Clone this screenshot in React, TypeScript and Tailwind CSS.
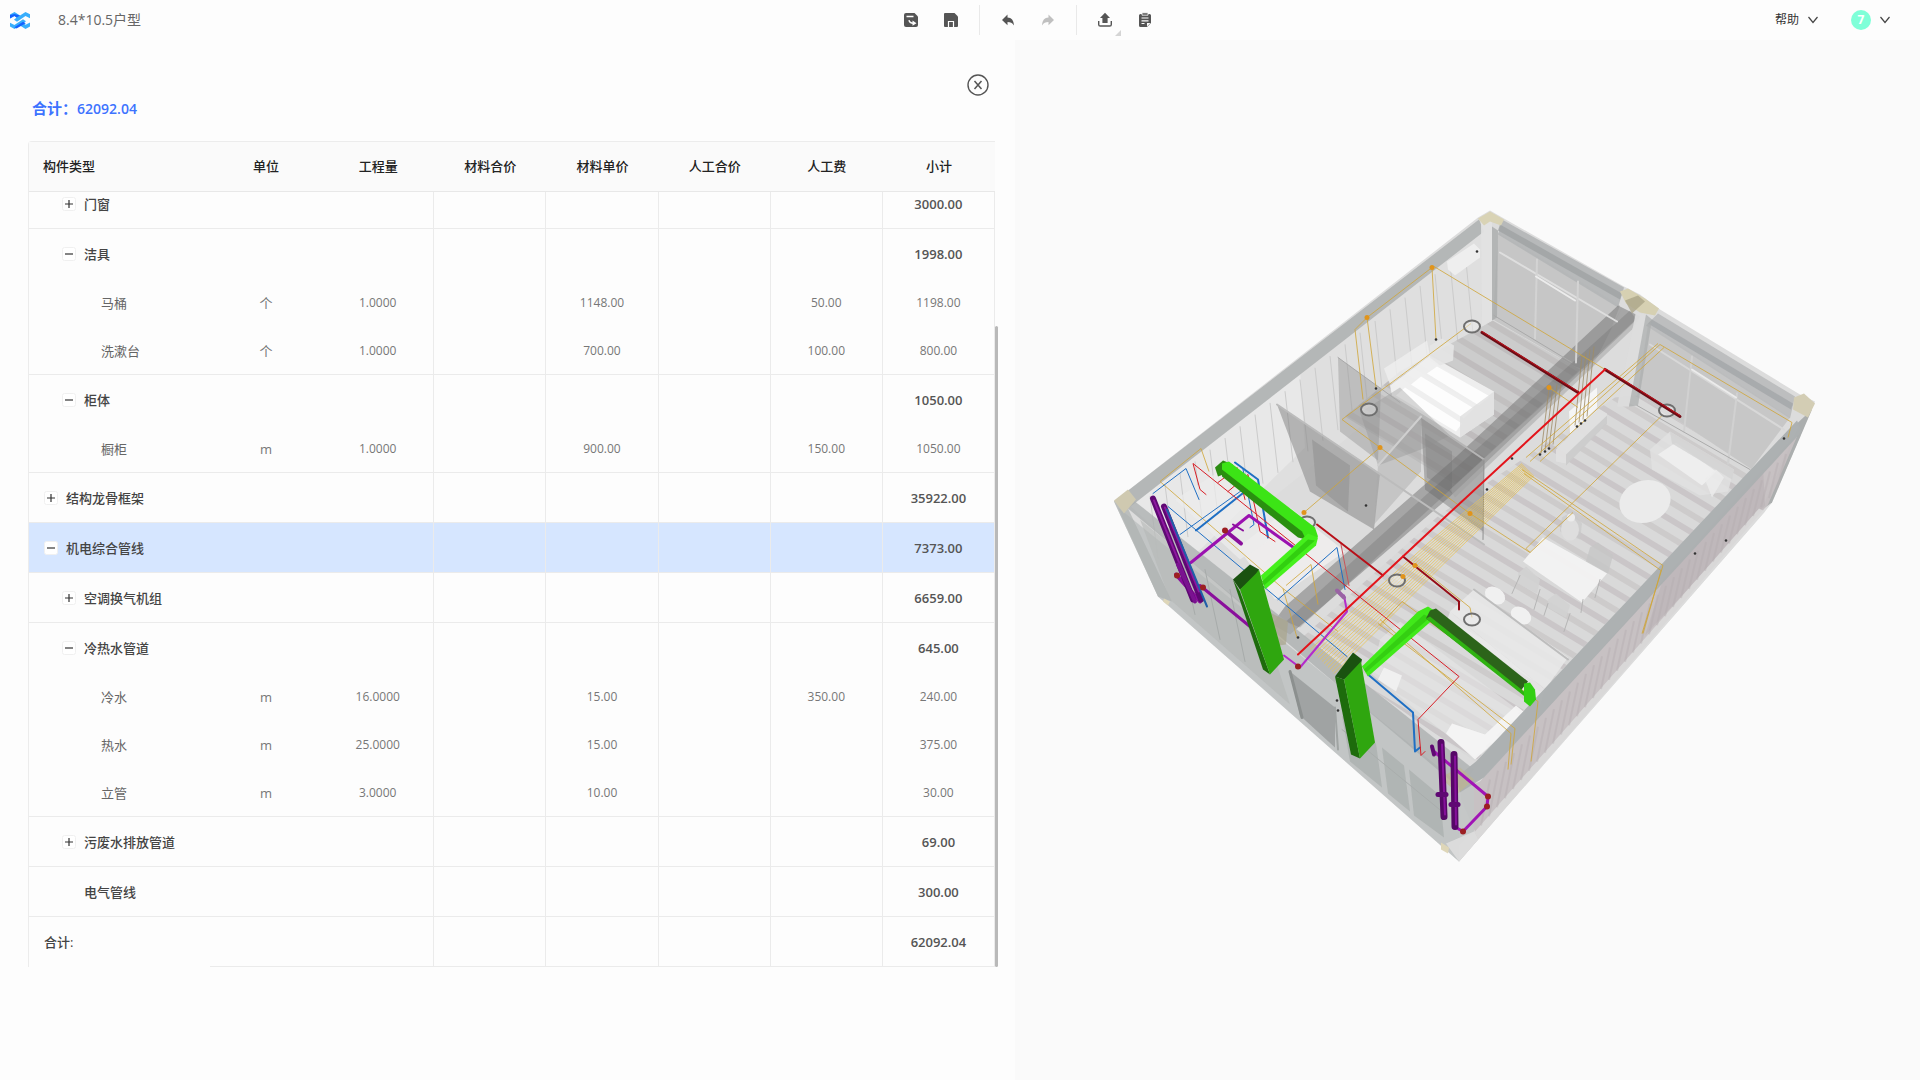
import { useState } from 'react';

type Row = {
  name: string;
  level: number;
  icon?: 'plus' | 'minus';
  leaf?: boolean;
  groupEnd?: boolean;
  unit?: string;
  amount?: string;
  materialPrice?: string;
  labor?: string;
  subtotal: string;
};

const columns = ['构件类型', '单位', '工程量', '材料合价', '材料单价', '人工合价', '人工费', '小计'];

const rows: Row[] = [
  { name: '门窗', level: 1, icon: 'plus', subtotal: '3000.00' },
  { name: '洁具', level: 1, icon: 'minus', subtotal: '1998.00' },
  { name: '马桶', level: 2, leaf: true, unit: '个', amount: '1.0000', materialPrice: '1148.00', labor: '50.00', subtotal: '1198.00' },
  { name: '洗漱台', level: 2, leaf: true, groupEnd: true, unit: '个', amount: '1.0000', materialPrice: '700.00', labor: '100.00', subtotal: '800.00' },
  { name: '柜体', level: 1, icon: 'minus', subtotal: '1050.00' },
  { name: '橱柜', level: 2, leaf: true, groupEnd: true, unit: 'm', amount: '1.0000', materialPrice: '900.00', labor: '150.00', subtotal: '1050.00' },
  { name: '结构龙骨框架', level: 0, icon: 'plus', subtotal: '35922.00' },
  { name: '机电综合管线', level: 0, icon: 'minus', subtotal: '7373.00' },
  { name: '空调换气机组', level: 1, icon: 'plus', subtotal: '6659.00' },
  { name: '冷热水管道', level: 1, icon: 'minus', subtotal: '645.00' },
  { name: '冷水', level: 2, leaf: true, unit: 'm', amount: '16.0000', materialPrice: '15.00', labor: '350.00', subtotal: '240.00' },
  { name: '热水', level: 2, leaf: true, unit: 'm', amount: '25.0000', materialPrice: '15.00', subtotal: '375.00' },
  { name: '立管', level: 2, leaf: true, groupEnd: true, unit: 'm', amount: '3.0000', materialPrice: '10.00', subtotal: '30.00' },
  { name: '污废水排放管道', level: 1, icon: 'plus', subtotal: '69.00' },
  { name: '电气管线', level: 1, subtotal: '300.00' },
];

// ---- Icons ----

function Logo() {
  return (
    <svg viewBox="0 0 20 17" className="h-[17px] w-5">
      <path d="M0 2.5 4.500 0 10 3.4 15.500 0 20 2.300v4L15.500 4 7 9.800 4 7.800 6.600 5.600 4.400 4 0 6.600z" fill="#38aefc" />
      <path d="M0 10.800 4.400 13 13 7.200 16 9.200 13.400 11.200l2.200 1.600L20 10.400v4L15.500 17 10 13.600 4.500 17 0 14.400z" fill="#38aefc" />
      <path d="M0 3v3.600L4.400 4l2.200 1.600L10 3.400 4.500 2z" fill="#1463ff" />
      <path d="M4.400 15.200 13 9.800l2.800 1.400L10 14.600 6.500 16.500z" fill="#1463ff" />
    </svg>
  );
}

function SaveAsIcon() {
  return (
    <svg viewBox="0 0 16 16" className="size-4" fill="#555">
      <path d="M3 1h8.500L15 4.500V13a2 2 0 0 1-2 2H3a2 2 0 0 1-2-2V3a2 2 0 0 1 2-2z" />
      <path d="M3.500 4.500h7" stroke="#fff" strokeWidth="1.500" />
      <path d="M6 8.200c.3 2.400 2.200 3 4.500 3" stroke="#fff" strokeWidth="1.400" fill="none" />
      <path d="m9.500 8.500 4 2.700-4 2.600z" fill="#fff" />
    </svg>
  );
}

function SaveIcon() {
  return (
    <svg viewBox="0 0 16 16" className="size-4">
      <path d="M2 1h9.500L15 4.500V14a1 1 0 0 1-1 1H2a1 1 0 0 1-1-1V2a1 1 0 0 1 1-1z" fill="#555" />
      <path d="M5.500 15V9.500h5V15" stroke="#fff" strokeWidth="1.200" fill="none" />
    </svg>
  );
}

function ArrowIcon({ redo = false }: { redo?: boolean }) {
  return (
    <svg viewBox="0 0 16 16" className={redo ? 'size-4 -scale-x-100' : 'size-4'}>
      <path d="M7.500 2.500v3c4 .2 6.200 2.800 6.500 8-1.800-2.600-3.400-3.400-6.500-3.400v3.200L2 7.900z" fill={redo ? '#c0c0c0' : '#555'} />
    </svg>
  );
}

function ExportIcon() {
  return (
    <svg viewBox="0 0 16 16" className="size-4">
      <path d="M8 .8 13 6h-2.400v5H5.400V6H3z" fill="#555" />
      <path d="M1.700 9v3.400a1.600 1.600 0 0 0 1.600 1.600h9.400a1.600 1.600 0 0 0 1.600-1.600V9" stroke="#555" strokeWidth="1.400" fill="none" />
    </svg>
  );
}

function ListIcon() {
  return (
    <svg viewBox="0 0 16 16" className="size-4">
      <path d="M3.500 2h9A1.500 1.500 0 0 1 14 3.500V11l-4 4H3.500A1.500 1.500 0 0 1 2 13.500v-10A1.500 1.500 0 0 1 3.500 2z" fill="#555" />
      <path d="M5 .8h6v2.400H5z" fill="#555" stroke="#fff" strokeWidth=".8" />
      <path d="M4.500 6h7M4.500 8.800h7M4.500 11.500h3" stroke="#fff" strokeWidth="1.200" />
      <path d="M10 11h3.500L10 14.600z" fill="#fff" />
    </svg>
  );
}

function Chevron() {
  return (
    <svg viewBox="0 0 12 8" className="h-2 w-3">
      <path d="m1.500 1 4.500 5.500L10.500 1" stroke="#444" strokeWidth="1.200" fill="none" />
    </svg>
  );
}

function ExpandIcon({ type }: { type: 'plus' | 'minus' }) {
  return (
    <svg viewBox="0 0 14 14" className="size-[14px]">
      <rect x=".5" y=".5" width="13" height="13" rx="2" fill="#fff" stroke="#f0f0f0" />
      <path d={type === 'plus' ? 'M3 7h8M7 3v8' : 'M3 7h8'} stroke="#333" strokeWidth="1.200" />
    </svg>
  );
}

// ---- Top bar ----

function TopBar() {
  return (
    <header className="flex h-10 items-center bg-[#fdfdfd]">
      <div className="flex w-[47%] items-center gap-7 pl-[10px]">
        <Logo />
        <h1 className="text-sm text-[#666]">8.4*10.5户型</h1>
      </div>
      <div className="flex flex-1 items-center pl-px">
        <div className="flex items-center gap-6">
          <button aria-label="另存为"><SaveAsIcon /></button>
          <button aria-label="保存"><SaveIcon /></button>
        </div>
        <div className="mx-5 h-[30px] w-px bg-[#e9e9e9]" />
        <div className="flex items-center gap-6">
          <button aria-label="撤销"><ArrowIcon /></button>
          <button aria-label="重做"><ArrowIcon redo /></button>
        </div>
        <div className="mx-5 h-[30px] w-px bg-[#e9e9e9]" />
        <div className="flex items-center gap-6">
          <button aria-label="导出" className="relative">
            <ExportIcon />
            <svg viewBox="0 0 6 6" className="absolute -right-2 -bottom-2 size-[6px]">
              <path d="M6 0v6H0z" fill="#d5d5d5" />
            </svg>
          </button>
          <button aria-label="清单"><ListIcon /></button>
        </div>
      </div>
      <div className="flex items-center gap-8 pr-[29px]">
        <button className="flex items-center gap-2 text-xs text-[#333]">
          帮助
          <Chevron />
        </button>
        <button className="flex items-center gap-2" aria-label="账户">
          <span className="flex size-5 items-center justify-center rounded-full bg-[#7fffd8] text-xs font-bold text-white">7</span>
          <Chevron />
        </button>
      </div>
    </header>
  );
}

// ---- Cost table ----

const indent = ['pl-[15px]', 'pl-[33px]', 'pl-[72px]'];

function CostTable({ selected, onSelect }: { selected: string; onSelect: (name: string) => void }) {
  return (
    <div className="relative mr-[17px] ml-7 pr-[3px]">
      <table className="w-full table-fixed border-separate border-spacing-0 rounded-tl border-t border-l border-[#ececec] text-[13px] leading-5">
        <thead>
          <tr className="h-[50px] bg-[#fafafa] text-[#222]">
            {columns.map((c, i) => (
              <th
                key={c}
                className={`border-b border-[#e8e8e8] p-0 pb-0.5 font-medium ${i === 0 ? 'w-[181px] pl-[14px] text-left' : 'text-center'}`}
              >
                {c}
              </th>
            ))}
          </tr>
        </thead>
        <tbody>
          {rows.map((row, index) => {
            const line = row.leaf ? row.groupEnd : row.icon !== 'minus' || row.level === 0;
            const border = line ? 'border-b' : '';
            const bold = row.leaf ? 'text-[#666]' : 'font-medium text-[#444]';
            const pad = index === 0 ? 'pb-3' : 'pb-0';
            const cell = `border-[#ebebeb] pt-0 px-0 text-center ${border} ${pad}`;
            return (
              <tr
                key={row.name}
                onClick={() => onSelect(row.name)}
                className={`${index === 0 ? 'h-[37px]' : row.leaf ? 'h-12' : 'h-[50px]'} ${
                  selected === row.name ? 'bg-[#d6e6ff]' : ''
                }`}
              >
                <td className={`border-[#ebebeb] py-0 pr-0 text-left ${border} ${pad} ${indent[row.level]}`}>
                  <div className={`flex items-center gap-2 ${bold}`}>
                    {row.icon && (
                      <button aria-label={row.icon === 'plus' ? '展开' : '收起'}>
                        <ExpandIcon type={row.icon} />
                      </button>
                    )}
                    {!row.icon && !row.leaf && <span className="w-[14px]" />}
                    {row.name}
                  </div>
                </td>
                <td className={`${cell} text-[#777]`}>{row.unit}</td>
                <td className={`${cell} border-r text-xs text-[#777]`}>{row.amount}</td>
                <td className={`${cell} border-r`} />
                <td className={`${cell} border-r text-xs text-[#777]`}>{row.materialPrice}</td>
                <td className={`${cell} border-r`} />
                <td className={`${cell} border-r text-xs text-[#777]`}>{row.labor}</td>
                <td className={`${cell} border-r ${row.leaf ? 'text-xs text-[#777]' : 'font-semibold text-[#555]'}`}>
                  {row.subtotal}
                </td>
              </tr>
            );
          })}
        </tbody>
        <tfoot>
          <tr className="h-[50px] font-medium text-[#444]">
            <td className="p-0 pl-[15px]">合计:</td>
            <td className="border-b border-[#ebebeb]" />
            <td className="border-r border-b border-[#ebebeb]" />
            <td className="border-r border-b border-[#ebebeb]" />
            <td className="border-r border-b border-[#ebebeb]" />
            <td className="border-r border-b border-[#ebebeb]" />
            <td className="border-r border-b border-[#ebebeb]" />
            <td className="border-r border-b border-[#ebebeb] p-0 text-center font-semibold text-[#555]">62092.04</td>
          </tr>
        </tfoot>
      </table>
      {/* Scrollbar thumb */}
      <div className="absolute right-0 bottom-0 h-[641px] w-[3px] rounded-sm bg-[#b9b9b9]" />
    </div>
  );
}

// ---- House model ----

type Shape = [points: string, fill: string, opacity?: number];
type Pipe = [points: string, color: string, width: number];

const shell: Shape[] = [
  ['1114,502 1478,218 1490,211 1504,219 1624,287 1640,295 1660,310 1800,395 1815,402 1772,503 1765,512 1459,862 1158,597', '#dcdcdc'],
  // long wall, seen from inside
  ['1130,506 1482,233 1493,321 1190,565', '#dfdfdf'],
  ['1130,506 1300,370 1305,448 1190,560', '#e8e8e8'],
  // far end walls
  ['1498,233 1620,306 1612,327 1575,367 1493,320', '#c6c6c6'],
  ['1648,325 1790,418 1751,470 1732,474 1636,404', '#c7c7c7'],
  ['1575,367 1612,327 1622,308 1590,372', '#b9b9b9', 0.6],
];

const floors: string[] = [
  '1493,321 1580,370 1455,485 1345,417 1400,372',
  '1615,398 1640,396 1752,470 1475,762 1372,690 1300,640 1440,515',
];

const interior: Shape[] = [
  // shade of the first room
  ['1493,321 1580,370 1455,485 1345,417 1400,372', '#8a8a8a', 0.16],
  // bathroom floor
  ['1238,548 1290,508 1345,552 1275,600', '#f1efef', 0.85],
  ['1175,500 1230,465 1300,520 1240,560', '#ececec', 0.7],
  // bed
  ['1384,369 1427,341 1430,356 1390,385', '#efefef', 0.8],
  ['1390,386 1430,356 1494,392 1494,415 1460,438 1392,396', '#f0f0f0', 0.95],
  ['1411,385 1421,377 1474,409 1464,419', '#fdfdfd'],
  ['1427,374 1437,367 1490,397 1479,406', '#fdfdfd'],
  ['1396,396 1405,388 1462,424 1456,432', '#fdfdfd'],
  ['1494,392 1494,415 1460,438 1460,417', '#dedede', 0.8],
  ['1430,346 1442,339 1454,346 1453,361 1440,366 1430,358', '#e6e6e6', 0.9],
  // air conditioner
  ['1447,262 1474,244 1480,250 1480,258 1455,276 1448,270', '#eeeeee'],
  // partitions
  ['1338,358 1381,389 1378,461 1340,432', '#8c8c8c', 0.4],
  ['1277,405 1380,474 1374,530 1310,492', '#7a7a7a', 0.48],
  ['1312,440 1350,466 1348,512 1316,486', '#666666', 0.22],
  ['1378,466 1421,417 1421,472 1374,525', '#a9a9a9', 0.45],
  ['1421,417 1484,460 1483,532 1425,490', '#7d7d7d', 0.5],
  ['1425,434 1452,452 1452,494 1427,478', '#666666', 0.25],
  ['1360,413 1400,388 1450,436 1421,450 1378,466', '#909090', 0.35],
  // media wall
  ['1569,412 1597,388 1597,412 1570,434', '#f6f6f6', 0.95],
  ['1556,450 1597,408 1607,414 1607,422 1566,464 1556,462', '#e0e0e0', 0.95],
  ['1566,455 1607,416 1607,424 1566,466', '#cbcbcb', 0.9],
  // sofa
  ['1650,450 1670,432 1734,470 1728,492 1700,496 1652,470', '#e1e1e1', 0.85],
  ['1658,455 1676,443 1716,472 1702,486', '#f0f0f0', 0.9],
  ['1670,432 1734,470 1732,480 1672,444', '#d2d2d2', 0.8],
  ['1705,480 1716,470 1724,478 1712,498', '#ececec', 0.8],
  // dining table
  ['1562,518 1572,512 1582,524 1580,540 1560,532', '#c9c9c9', 0.7],
  ['1590,548 1598,543 1613,556 1608,574 1586,562', '#c6c6c6', 0.8],
  ['1543,538 1607,574 1582,603 1523,562', '#f3f3f3', 0.95],
  ['1518,574 1526,567 1540,580 1537,594 1518,584', '#d2d2d2', 0.9],
  ['1548,600 1556,594 1570,606 1566,618 1548,608', '#d2d2d2', 0.9],
  // kitchen counter
  ['1450,612 1474,590 1568,658 1545,690', '#e8e8e8', 0.9],
  ['1450,612 1545,690 1540,706 1446,624', '#f0f0f0', 0.7],
  // second bedroom
  ['1380,640 1400,622 1520,712 1475,758 1372,675', '#e6e6e6', 0.6],
  ['1485,735 1516,706 1526,714 1475,760 1446,734 1452,724', '#f6f6f6', 0.9],
  ['1384,668 1402,676 1396,692 1378,680', '#f2f2f2', 0.9],
];

const frame: Shape[] = [
  // roof beams
  ['1114,502 1479,220 1484,232 1128,509', '#b1b4b4', 0.95],
  ['1502,220 1624,288 1618,308 1498,235', '#b4b6b7', 0.95],
  ['1500,225 1622,294 1620,300 1498,231', '#9fa2a4', 0.8],
  ['1658,314 1795,397 1790,419 1646,326', '#babcbd', 0.95],
  ['1652,320 1793,404 1791,410 1648,324', '#a0a3a5', 0.7],
  ['1618,306 1640,317 1450,497 1290,635 1272,625 1285,607 1450,463', '#707070', 0.5],
  ['1630,311 1636,320 1300,628 1286,622', '#555555', 0.22],
  ['1640,317 1632,330 1455,498 1450,490', '#a0a0a0', 0.5],
  // posts
  ['1481,221 1492,221 1492,321 1482,327', '#e2e2e2', 0.95],
  ['1492,227 1498,231 1497,318 1492,321', '#a9abab', 0.8],
  ['1636,312 1646,315 1629,407 1617,407', '#dcdcdc', 0.95],
  ['1646,315 1652,320 1638,406 1629,407', '#aaacac', 0.7],
  ['1797,424 1812,410 1772,503 1762,510', '#a8abab', 0.95],
  ['1793,428 1799,426 1768,495 1762,500', '#dcdcdc', 0.9],
  // long facade
  ['1480,782 1800,430 1768,505 1459,862 1461,790', '#c5bfc1', 0.95],
  ['1763,468 1722,512 1690,550 1664,577 1645,636 1765,506', '#b8b0b3', 0.5],
  ['1459,862 1765,512 1759,509 1475,832 1461,800', '#dcdcdc', 0.85],
  // short facade
  ['1118,508 1460,785 1459,862 1158,597', '#bec1c1', 0.88],
  ['1114,502 1128,509 1172,602 1158,597', '#acb0af', 0.7],
  ['1140,520 1262,620 1290,705 1170,600', '#b4b7b6', 0.6],
  ['1128,509 1135,502 1474,770 1460,789', '#a9adad', 0.75],
  ['1290,672 1335,708 1335,748 1300,716', '#8e9190', 0.65],
  ['1342,716 1376,744 1382,788 1350,762', '#aeb3b1', 0.9],
  ['1382,748 1404,766 1410,812 1388,794', '#aeb3b1', 0.9],
  ['1409,770 1440,796 1444,838 1414,816', '#aeb3b1', 0.9],
  ['1458,790 1474,780 1474,832 1459,846', '#c2c5c5', 0.9],
  ['1446,844 1474,832 1478,840 1459,862', '#dcdcdc', 0.95],
  ['1476,762 1797,421 1802,432 1484,778 1460,793 1456,778', '#abafb1', 0.97],
  // corner castings
  ['1478,219 1490,212 1504,220 1501,226 1490,222 1484,226', '#d9d3b5'],
  ['1620,292 1628,289 1645,299 1659,309 1655,316 1640,313 1626,304', '#d6d0b2'],
  ['1625,301 1638,296 1645,302 1632,314', '#aba588', 0.8],
  ['1794,398 1804,394 1815,404 1808,418 1793,410', '#d3cdb4'],
  ['1114,501 1128,490 1136,500 1124,514', '#cfc9b0'],
  ['1256,622 1270,613 1288,622 1286,645 1264,648', '#a9a58c', 0.7],
  ['1440,778 1460,768 1474,780 1458,794', '#bfb58a', 0.6],
  ['1164,599 1170,602 1168,606 1163,602', '#ded6b8'],
  ['1441,843 1449,848 1448,854 1441,850', '#ded6b8'],
];

const trims: Pipe[] = [
  ['1500,253 1617,322', '#dedede', 2],
  ['1537,260 1535,339', '#d3d3d3', 2],
  ['1578,282 1576,363', '#d3d3d3', 2],
  ['1536,277 1575,301', '#ececec', 2],
  ['1494,316 1572,363', '#a9a9a9', 1],
  ['1650,345 1784,430', '#d8d8d8', 2],
  ['1692,357 1684,432', '#d1d1d1', 2],
  ['1737,394 1728,464', '#d1d1d1', 2],
  ['1692,370 1736,398', '#ebebeb', 2],
  ['1637,406 1750,470', '#ababab', 1],
  ['1277,405 1484,545', '#bcbcbc', 2],
  ['1338,358 1400,403', '#a8a8a8', 1],
  ['1421,417 1484,460', '#b5b5b5', 2],
  ['1378,466 1421,417', '#cfcfcf', 2],
  ['1484,460 1483,540', '#8f8f8f', 1],
  ['1342,730 1442,812', '#a9adac', 1],
  ['1290,672 1302,718', '#8c908f', 3],
  ['1335,708 1338,750', '#a0a4a3', 2],
  ['1205,570 1220,640', '#a7abaa', 1],
  ['1180,548 1195,615', '#a7abaa', 1],
  ['1230,590 1245,662', '#a7abaa', 1],
  ['1520,576 1512,594', '#b5b5b5', 1],
  ['1540,590 1534,610', '#b5b5b5', 1],
  ['1548,604 1544,616', '#b5b5b5', 1],
  ['1570,614 1564,632', '#b5b5b5', 1],
  ['1583,600 1581,613', '#b5b5b5', 1],
  ['1600,580 1595,598', '#b5b5b5', 1],
  ['1474,590 1568,660', '#bdbdbd', 2],
];

const cables: string[] = [
  '1432,268 1367,318 1355,330 1363,400',
  '1434,267 1605,370',
  '1432,268 1436,340',
  '1367,318 1376,388',
  '1471,324 1342,420 1380,448 1470,514 1530,553',
  '1380,448 1304,513',
  '1660,345 1792,423 1788,438',
  '1660,345 1530,462',
  '1658,344 1526,458',
  '1664,348 1540,462',
  '1549,388 1578,408',
  '1663,415 1573,503 1526,549 1530,553 1573,513',
  '1522,470 1663,566 1642,634',
  '1524,474 1661,571 1643,634',
  '1160,482 1201,449 1209,472',
  '1160,482 1283,589 1338,632',
  '1286,586 1311,565 1318,605',
  '1283,589 1297,638',
  '1380,626 1402,602 1538,702 1531,762',
  '1378,624 1515,729 1511,765',
  '1380,620 1511,734 1508,770',
  '1415,564 1470,608 1472,618',
];

const pipes: Pipe[] = [
  // cold water
  ['1153,494 1186,469 1199,500', '#1f6fc4', 1],
  ['1168,507 1347,657', '#1f6fc4', 1],
  ['1368,675 1413,713 1415,752 1420,748', '#1f6fc4', 2],
  ['1180,535 1250,485', '#1f6fc4', 1],
  ['1196,531 1245,492', '#1f6fc4', 2],
  ['1235,463 1258,480 1268,538', '#1f6fc4', 2],
  ['1243,470 1254,525 1250,528', '#1f6fc4', 1],
  ['1278,600 1337,548 1345,590', '#1f6fc4', 1],
  // hot water
  ['1206,495 1200,490 1193,464 1459,677 1418,720 1421,756 1425,752', '#d81e26', 1],
  ['1218,483 1230,474', '#d81e26', 1],
  ['1228,492 1248,475 1260,532 1275,542', '#d81e26', 1],
  ['1237,468 1245,500', '#d81e26', 1],
  ['1341,545 1349,586', '#c9545a', 1],
  // drains
  ['1191,563 1249,516 1295,549', '#9b12b0', 3],
  ['1225,531 1241,544', '#8a0f9c', 4],
  ['1233,525 1243,531', '#8a0f9c', 2],
  ['1176,575 1200,602', '#8a0f9c', 4],
  ['1200,586 1250,627', '#8a0f9c', 3],
  ['1284,656 1300,668 1347,612 1344,596', '#b42ccb', 2],
  ['1337,591 1344,598', '#9a63a4', 4],
  ['1153,499 1193,600', '#5f0873', 6],
  ['1164,507 1201,600', '#5f0873', 6],
  ['1154,501 1192,595', '#8d189f', 2],
  ['1165,508 1199,592', '#8d189f', 2],
  ['1167,510 1207,607', '#205fa8', 2],
  ['1178,565 1195,602', '#7a1290', 4],
  ['1434,752 1488,797 1487,807 1463,832 1456,828', '#a114b6', 3],
  ['1441,743 1444,817', '#560767', 7],
  ['1454,755 1455,827', '#560767', 7],
  ['1442,745 1445,815', '#86119b', 2],
  ['1455,757 1456,825', '#86119b', 2],
  ['1432,747 1434,755', '#5f0873', 4],
  ['1438,795 1446,795', '#5f0873', 5],
  ['1451,805 1458,805', '#5f0873', 5],
  // sprinkler mains
  ['1482,333 1578,393', '#6d0d16', 3],
  ['1482,332 1578,392', '#c2101a', 1],
  ['1605,370 1680,417', '#6d0d16', 3],
  ['1605,369 1680,416', '#c2101a', 1],
  ['1317,525 1383,576', '#b80f18', 2],
  ['1403,557 1459,602 1459,610', '#960d18', 2],
  ['1605,370 1450,513 1298,655', '#e3141b', 2],
];

const ducts: Shape[] = [
  ['1215,468 1223,461 1233,465 1226,474 1218,477', '#2b8c12'],
  ['1222,464 1229,462 1315,528 1318,537 1310,544 1300,535 1222,474', '#3ce416'],
  ['1222,470 1302,532 1306,540 1298,538 1222,477', '#2a8f10'],
  ['1308,534 1318,538 1316,546 1265,590 1261,576', '#45f01c'],
  ['1308,540 1315,541 1264,586 1262,582', '#32cf10'],
  ['1233,580 1250,565 1259,570 1256,578 1240,590', '#1a5210'],
  ['1233,580 1240,592 1270,675 1263,670', '#1d6b0c'],
  ['1240,590 1256,574 1259,570 1284,660 1270,675', '#2fa60f'],
  ['1418,612 1428,607 1436,612 1432,621 1368,677 1362,667', '#41e91a'],
  ['1424,615 1430,618 1366,673 1364,670', '#34cf12'],
  ['1430,611 1436,609 1528,682 1520,692 1426,619', '#2c641a'],
  ['1426,619 1430,617 1524,692 1526,698', '#2fb311'],
  ['1524,684 1530,683 1535,690 1536,700 1530,707 1524,702', '#32cf14'],
  ['1335,677 1353,653 1362,660 1360,668 1344,680', '#1a5210'],
  ['1335,677 1344,680 1360,759 1351,755', '#1d6b0c'],
  ['1344,680 1361,662 1375,743 1360,759', '#2fa60f'],
];

const rings = [[1472, 327], [1369, 410], [1667, 411], [1307, 523], [1397, 581], [1472, 620]];
const junctions = [[1432, 268], [1367, 318], [1549, 388], [1380, 448], [1304, 513], [1470, 514], [1415, 566], [1403, 577]];
const sockets = [
  [1477, 252], [1436, 340], [1376, 389], [1784, 439], [1540, 455], [1545, 452], [1549, 449], [1577, 427], [1581, 424],
  [1585, 421], [1512, 459], [1487, 490], [1695, 554], [1726, 541], [1366, 506], [1337, 701], [1338, 711], [1298, 638],
];
const fittings = [[1225, 531], [1177, 576], [1203, 588], [1298, 667], [1488, 797], [1487, 807], [1463, 832]];

function HouseModel() {
  const polygon = ([points, fill, opacity]: Shape) => <polygon key={points} points={points} fill={fill} opacity={opacity} />;
  const polyline = ([points, color, width]: Pipe) => (
    <polyline key={points + color} points={points} stroke={color} strokeWidth={width} fill="none" strokeLinejoin="round" strokeLinecap="round" />
  );

  return (
    <svg viewBox="1015 41 905 1039" className="h-full w-full" role="img" aria-label="3D 模型">
      <defs>
        <clipPath id="floors">
          {floors.map((f) => <polygon key={f} points={f} />)}
        </clipPath>
      </defs>
      {shell.map(polygon)}

      {/* Wall panel joints */}
      {Array.from({ length: 22 }, (_, i) => {
        const x = 1150 + i * 15;
        const y = 497 - i * 11.7;
        return <line key={i} x1={x} y1={y} x2={x + 8} y2={y + 62 + i} stroke="#cbcbcb" strokeWidth="1" />;
      })}

      {/* Plank floor */}
      <g clipPath="url(#floors)">
        <rect x="1280" y="300" width="500" height="480" fill="#d9d9d9" />
        {Array.from({ length: 42 }, (_, i) => {
          const x = 1560 - i * 11;
          const y = 290 + i * 11;
          return <line key={i} x1={x - 160} y1={y - 92} x2={x + 360} y2={y + 222} stroke={i % 2 ? '#cac6c8' : '#cdcbcb'} strokeWidth="6" />;
        })}
      </g>
      {interior.map(polygon)}
      <ellipse cx="1645" cy="502" rx="26" ry="21" fill="#ebebeb" transform="rotate(-18 1645 502)" />
      <ellipse cx="1570" cy="530" rx="9" ry="11" fill="#dedede" />
      <circle cx="1571" cy="518" r="4" fill="#ececec" />
      <ellipse cx="1495" cy="596" rx="11" ry="8" fill="#f0f0f0" transform="rotate(35 1495 596)" />
      <ellipse cx="1521" cy="616" rx="11" ry="8" fill="#f0f0f0" transform="rotate(35 1521 616)" />
      {frame.map(polygon)}
      {trims.map(polyline)}

      {/* Corrugated facade */}
      {Array.from({ length: 38 }, (_, i) => {
        const x = 1490 + i * 8;
        const y = 780 - i * 8.8;
        return <line key={i} x1={x} y1={y} x2={x - 9} y2={y + 46 - i * 0.3} stroke="#b5adb0" strokeWidth="2" opacity="0.4" />;
      })}

      {/* Cable tray */}
      {Array.from({ length: 13 }, (_, i) => (
        <polyline
          key={i}
          points={`${1310 + i * 2},${650 + i * 2} ${1430 + i * 1.5},${542 + i * 1.5} ${1522 + i},${464 + i}`}
          stroke="#e9c352"
          strokeWidth="1"
          fill="none"
          opacity="0.75"
        />
      ))}
      {[0, 1, 2, 3].map((i) => (
        <g key={i} stroke="#a08c66" strokeWidth="1" opacity="0.8">
          <line x1={1549 + i * 4} y1={389 - i * 2} x2={1541 + i * 4} y2={454 - i * 3} />
          <line x1={1582 + i * 4} y1={356 - i * 3} x2={1575 + i * 4} y2={426 - i * 3} />
        </g>
      ))}
      {cables.map((c) => (
        <polyline key={c} points={c} stroke="#cfa536" strokeWidth="1" fill="none" opacity="0.8" />
      ))}

      {rings.map(([x, y]) => (
        <ellipse key={`${x}-${y}`} cx={x} cy={y} rx="8" ry="6" fill="#eeeeee" fillOpacity="0.5" stroke="#6f6f6f" strokeWidth="2" />
      ))}
      {pipes.map(polyline)}
      {fittings.map(([x, y]) => <circle key={`${x}-${y}`} cx={x} cy={y} r="3" fill="#9c1f22" />)}
      {ducts.map(polygon)}
      {junctions.map(([x, y]) => <circle key={`${x}-${y}`} cx={x} cy={y} r="2.500" fill="#e0941c" />)}
      {sockets.map(([x, y]) => <circle key={`${x}-${y}`} cx={x} cy={y} r="1.300" fill="#333" />)}
    </svg>
  );
}

export default function App() {
  const [selected, setSelected] = useState('机电综合管线');

  return (
    <div className="flex h-screen flex-col bg-[#fdfdfd] font-['Open_Sans','Noto_Sans','Noto_Sans_CJK_SC',sans-serif]">
      <TopBar />
      <main className="grid min-h-0 flex-1 grid-cols-[1015fr_905fr]">
        <section className="overflow-hidden">
          <div className="flex justify-end pt-[34px] pr-[26px]">
            <button aria-label="关闭">
              <svg viewBox="0 0 22 22" className="size-[22px]">
                <circle cx="11" cy="11" r="10" stroke="#555" strokeWidth="1.400" fill="none" />
                <path d="m7.500 7 7 8M14.500 7l-7 8" stroke="#555" strokeWidth="1.500" />
              </svg>
            </button>
          </div>
          <p className="mb-[21px] pl-8 text-[15px] leading-6 font-semibold text-[#3d73ff]">
            合计：<span className="text-sm">62092.04</span>
          </p>
          <CostTable selected={selected} onSelect={setSelected} />
        </section>
        <section className="min-h-0 bg-[#fafafa]">
          <HouseModel />
        </section>
      </main>
    </div>
  );
}
